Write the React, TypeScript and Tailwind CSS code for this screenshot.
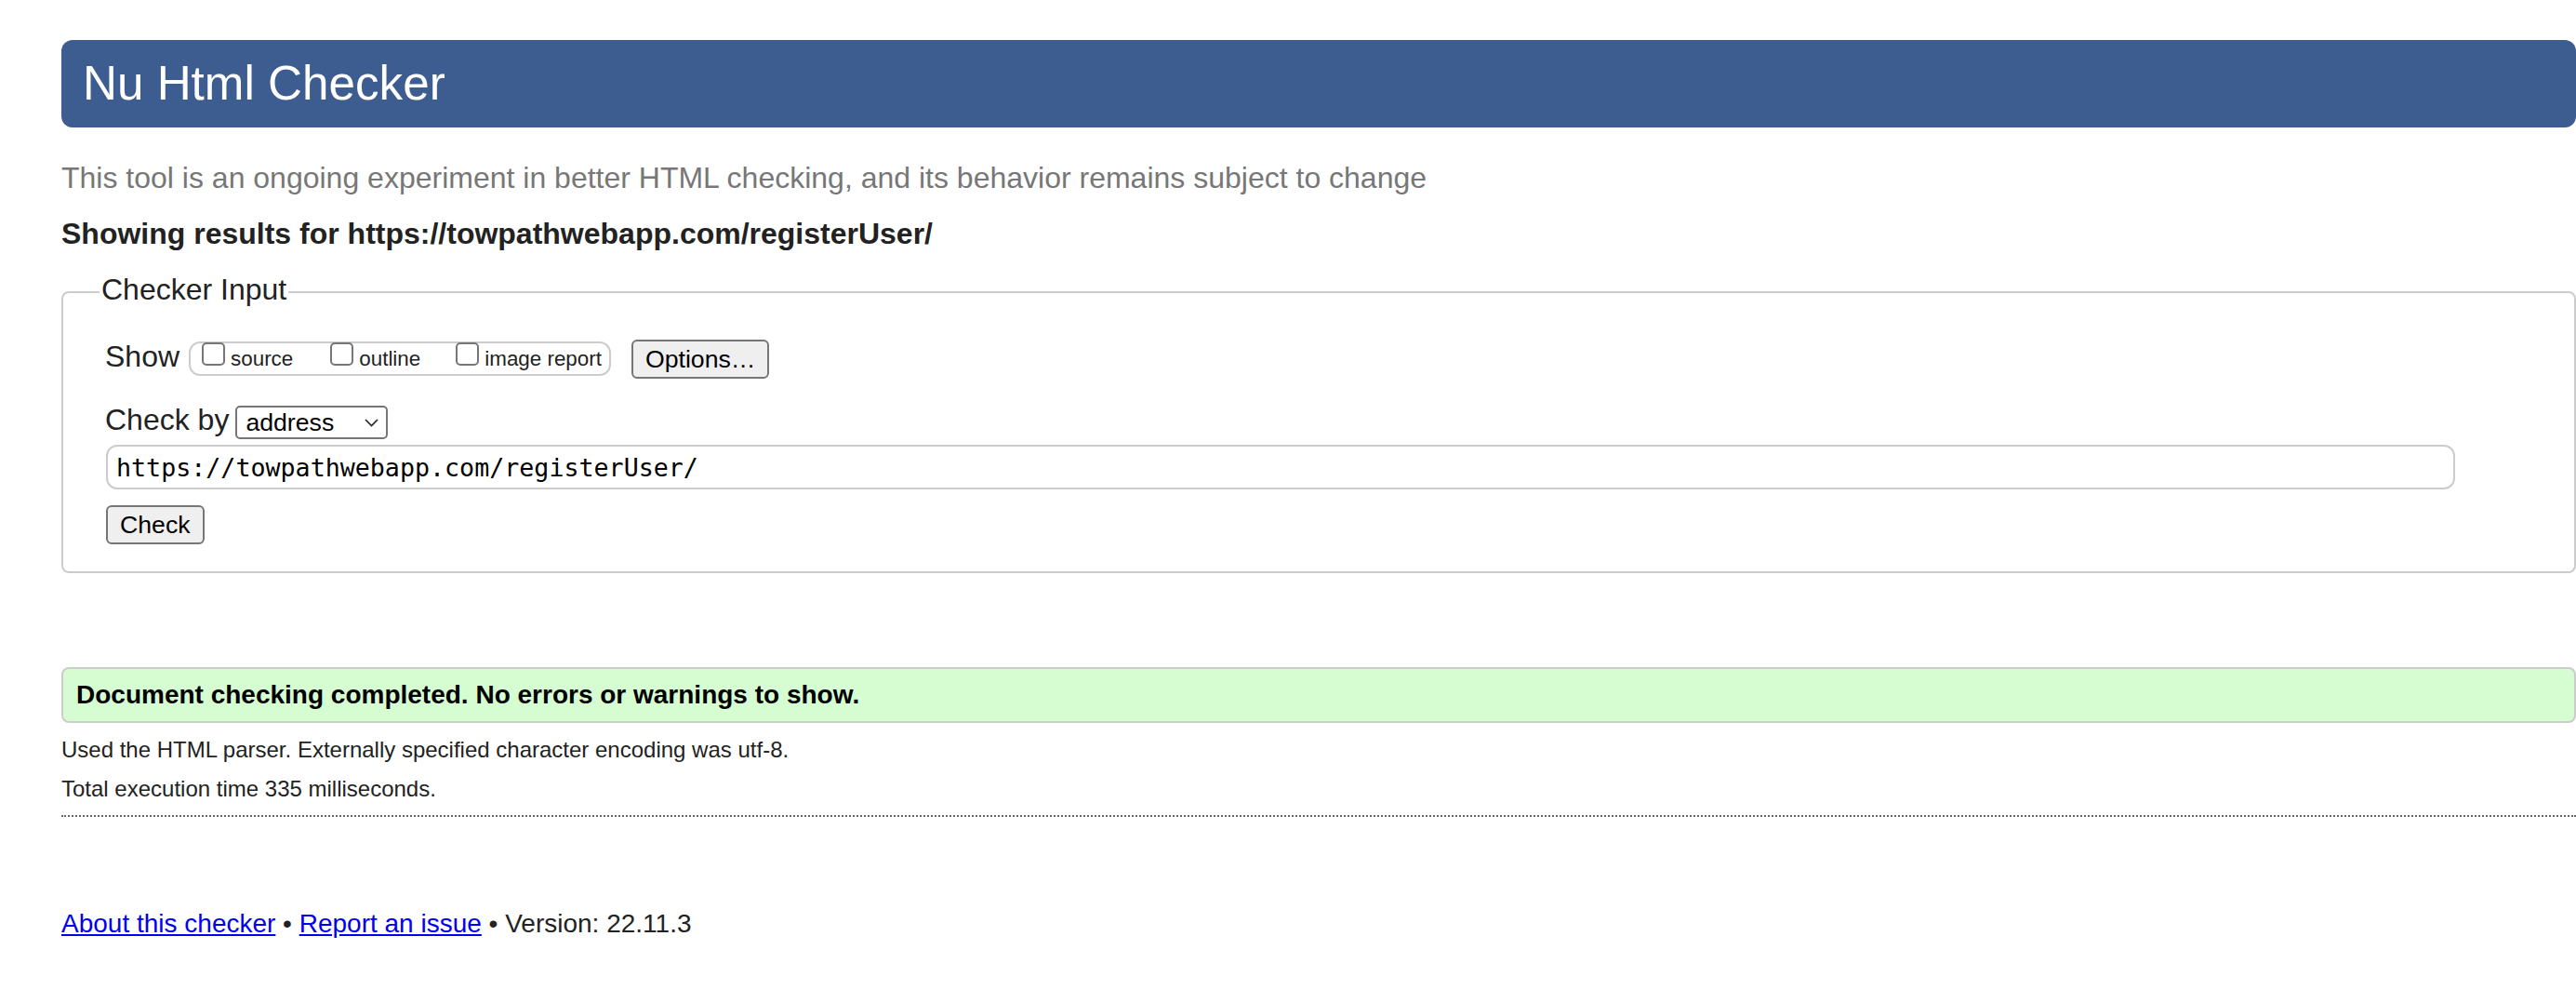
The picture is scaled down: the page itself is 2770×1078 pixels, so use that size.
const checks = [
  { label: 'source', gap: 'ml-0' },
  { label: 'outline', gap: 'ml-[40px]' },
  { label: 'image report', gap: 'ml-[38px]' },
];

const App = () => {
  return (
    <div className="min-h-[1078px] bg-white pl-[66px] pt-[43px] font-['Liberation_Sans',Arial,sans-serif] text-[32px] text-[#222]">
      {/* Title bar */}
      <header className="flex h-[94px] items-center rounded-[12px] bg-[#3d5d91] pl-[23px]">
        <h1 className="text-[51.2px] font-normal leading-[94px] text-white">Nu Html Checker</h1>
      </header>

      <p className="mt-[36px] leading-[37px] text-[#777]">
        This tool is an ongoing experiment in better HTML checking, and its behavior remains subject to change
      </p>
      <h2 className="mt-[23px] text-[32px] font-bold leading-[37px]">
        Showing results for https://towpathwebapp.com/registerUser/
      </h2>

      {/* Checker input form */}
      <fieldset className="mt-[25px] rounded-[8px] border-2 border-[#ccc] pb-[29px] pl-[45px]">
        <legend className="ml-[-6px] px-[2px] leading-[37px]">
          <span className="relative top-[-2px]">Checker Input</span>
        </legend>

        <div className="mt-[33px] flex h-[42px] items-start">
          <span className="leading-[37px]">Show</span>
          <div className="ml-[10px] mt-[2px] flex h-[37px] items-start rounded-[12px] border-2 border-[#ccc] pl-[12px] pr-[8px]">
            {checks.map((c) => (
              <label key={c.label} className={`flex items-start ${c.gap}`}>
                <span className="mt-[-1px] h-[25px] w-[25px] rounded-[5px] border-2 border-[#767676] bg-white" />
                <span className="ml-[6px] mt-[4px] text-[22.4px] leading-[26px]">{c.label}</span>
              </label>
            ))}
          </div>
          <button className="ml-[22px] block h-[42px] rounded-[6px] border-2 border-[#767676] bg-[#efefef] px-[13px] text-[26.67px] leading-[38px] text-black">
            Options…
          </button>
        </div>

        <div className="mt-[26px] flex h-[39px] items-start">
          <span className="leading-[37px]">Check by</span>
          <div className="relative ml-[7px] mt-[3px] h-[36px] w-[164px]">
            <select
              defaultValue="address"
              className="block h-[36px] w-full appearance-none rounded-[5px] border-2 border-[#767676] bg-white pl-[9px] text-[26.67px] leading-[32px] text-black"
            >
              <option value="address">address</option>
              <option value="upload">file upload</option>
              <option value="input">text input</option>
            </select>
            <svg className="pointer-events-none absolute right-[10px] top-[14px]" width="15" height="9" viewBox="0 0 15 9">
              <path d="M1 1l6.5 6.5L14 1" stroke="#222" strokeWidth="1.6" fill="none" />
            </svg>
          </div>
        </div>

        <input
          readOnly
          value="https://towpathwebapp.com/registerUser/"
          className="ml-[1px] mt-[6px] block h-[48px] w-[2526px] rounded-[12px] border-2 border-[#ccc] bg-white pl-[9px] font-['DejaVu_Sans_Mono',monospace] text-[26.67px] text-black outline-none"
        />

        <button className="ml-[1px] mt-[17px] block h-[42px] rounded-[6px] border-2 border-[#767676] bg-[#efefef] px-[13px] text-[26.67px] leading-[38px] text-black">
          Check
        </button>
      </fieldset>

      {/* Result */}
      <div className="mt-[101px] flex h-[60px] items-center rounded-[8px] border-2 border-[#ccc] bg-[#d6fcd1] pl-[14px] text-[28px] font-bold text-black">
        Document checking completed. No errors or warnings to show.
      </div>
      <p className="mt-[15px] text-[24px] leading-[28px]">
        Used the HTML parser. Externally specified character encoding was utf-8.
      </p>
      <p className="mt-[14px] text-[24px] leading-[28px]">Total execution time 335 milliseconds.</p>
      <div className="mt-[14px] border-t-2 border-dotted border-[#666]" />

      <footer className="mt-[99px] text-[28px] leading-[32px]">
        <a href="#" className="text-[#00e] underline">About this checker</a> •{' '}
        <a href="#" className="text-[#00e] underline">Report an issue</a> • Version: 22.11.3
      </footer>
    </div>
  );
};

export default App;
